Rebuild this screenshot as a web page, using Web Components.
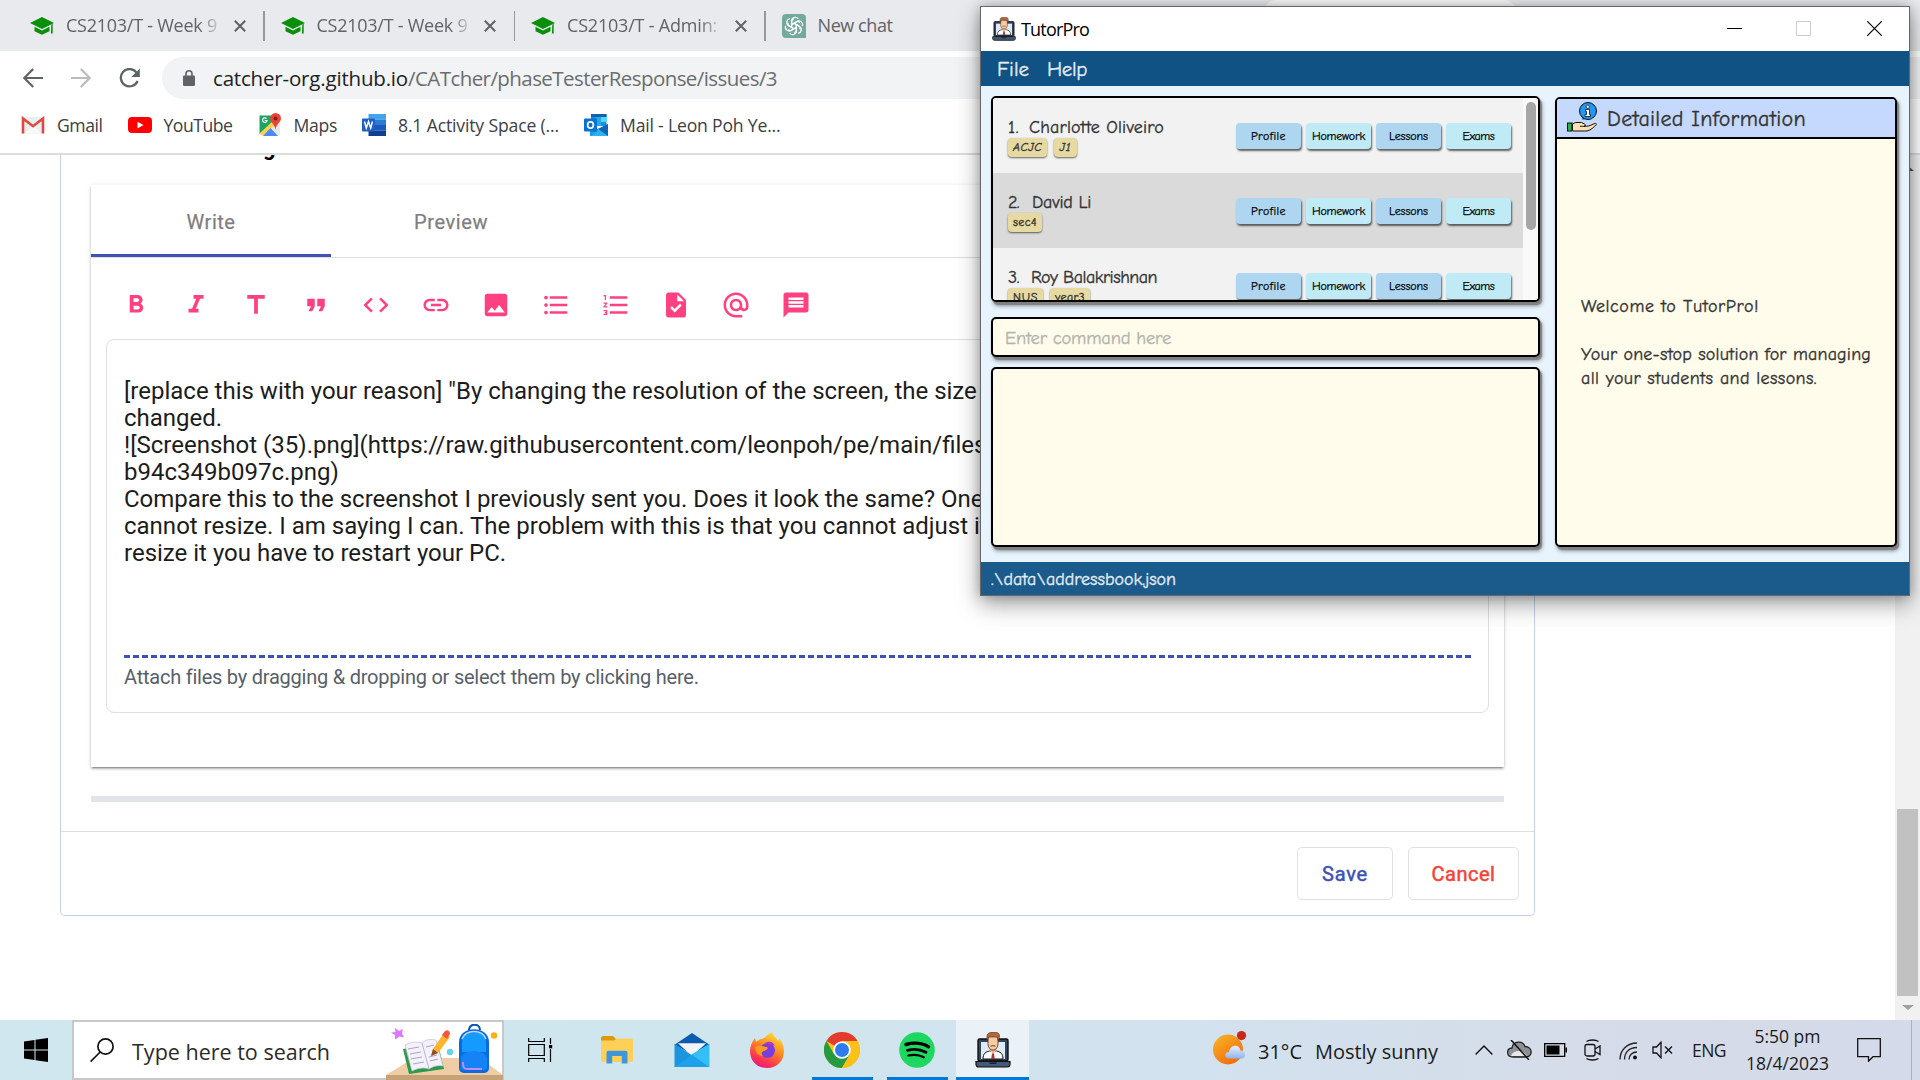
<!DOCTYPE html>
<html lang="en">
<head>
<meta charset="utf-8">
<title>Desktop</title>
<style>
html,body{margin:0;padding:0;width:1920px;height:1080px;overflow:hidden;background:#fff}
</style>
</head>
<body>
<desk-top></desk-top>
<script>
const UI='"Segoe UI","Open Sans","Noto Sans",sans-serif';
const COMIC='"Comic Sans MS","Comic Neue","Noto Sans",sans-serif';
const define=(name,css,html)=>customElements.define(name,class extends HTMLElement{
  constructor(){super();this.attachShadow({mode:'open'});}
  connectedCallback(){
    if(this.shadowRoot.childNodes.length)return;
    const t=document.createElement('template');
    t.innerHTML='<style>*{box-sizing:border-box}:host{display:block;box-sizing:border-box}'+css+'</style>'+(typeof html==='function'?html(this):html);
    this.shadowRoot.append(t.content.cloneNode(true));
  }
});

/* A single line of text spread over a given width. */
customElements.define('fit-text',class extends HTMLElement{
  connectedCallback(){
    if(!this.shadowRoot){
      this.attachShadow({mode:'open'}).innerHTML='<style>:host{display:block;white-space:pre;flex:none}span{display:inline-block}</style><span><slot></slot></span>';
    }
    const w=+this.getAttribute('w');
    this.style.width=w+'px';
    const s=this.shadowRoot.querySelector('span');
    const n=s.getBoundingClientRect().width, c=[...this.textContent].length;
    if(n&&w)s.style.letterSpacing=((w-n)/c).toFixed(3)+'px';
  }
});

const M=p=>`<svg viewBox="0 0 24 24"><path fill="currentColor" d="${p}"/></svg>`;
const TUTOR=`<svg viewBox="0 0 36 36"><rect x="3" y="7" width="30" height="22" rx="1.5" fill="#33465c" stroke="#111" stroke-width="1.4"/><rect x="6" y="10" width="24" height="17" fill="#dfeaf8"/><path d="M8 27c0-6 3-7 6.500-8h7c3.500 1 6.500 2 6.500 8z" fill="#fff" stroke="#111" stroke-width="1"/><path d="M14.500 18l3.500 4 3.500-4v-3h-7z" fill="#eab88e"/><path d="M17 21.500h2l.8 5.500h-3.600z" fill="#b2323c"/><path d="M13 4.500h10v7c0 4-2.200 6.500-5 6.500s-5-2.500-5-6.500z" fill="#f7cba4" stroke="#5d3420" stroke-width=".9"/><path d="M15.500 14.500c1-1.300 4-1.300 5 0" stroke="#9c5a33" stroke-width="1.200" fill="none"/><path d="M12 9V4c0-2 2-3.500 4-3.500h5c2 0 3.500 1.500 3.500 3.500l-1 5-1.500-4h-8z" fill="#b06a3c" stroke="#5d3420" stroke-width=".7"/><path d="M1 29.500h34v2.500c0 2-1 3-3 3H4c-2 0-3-1-3-3z" fill="#435b78" stroke="#111" stroke-width="1.200"/><path d="M14 30.500h8l-1 1.500h-6z" fill="#16202c"/></svg>`;
const ICONS={
 cap:`<svg viewBox="0 0 24 18"><g fill="#0a8f0a"><path d="M12 0L0 6l12 6 12-6z"/><path d="M4.500 9.800v4.400L12 17.800l7.500-3.600V9.800L12 13.500z"/><path d="M21.300 7.500l1.400-.7v9.700h-1.800z"/></g></svg>`,
 close:`<svg viewBox="0 0 12 12"><path d="M.8.8l10.400 10.400M11.200.8L.8 11.200" stroke="#5f6368" stroke-width="2" fill="none"/></svg>`,
 chat:`<svg viewBox="0 0 24 24"><path d="M4 0h16a4 4 0 0 1 4 4v20H4a4 4 0 0 1-4-4V4a4 4 0 0 1 4-4z" fill="#74aa9c"/><g fill="none" stroke="#fff" stroke-width="1.250">${[0,60,120,180,240,300].map(a=>`<path transform="rotate(${a} 12 12)" d="M9.600 13.400V7.200a3.800 3.800 0 0 1 6.700-2.400M12 9.200l5 2.900a2.400 2.400 0 0 1 .8 3"/>`).join('')}</g></svg>`,
 back:`<svg viewBox="0 0 20 20"><path d="M20 10H1.500M10.200 1L1.300 10l8.900 9" fill="none" stroke="#5f6368" stroke-width="2.200"/></svg>`,
 fwd:`<svg viewBox="0 0 20 20"><path d="M0 10h18.500M9.800 1l8.900 9-8.900 9" fill="none" stroke="#babcbe" stroke-width="2.200"/></svg>`,
 reload:`<svg viewBox="0 0 21 21"><path d="M17.600 4.600A8.700 8.700 0 1 0 18.600 13" fill="none" stroke="#5f6368" stroke-width="2.300"/><path d="M20.800 .5v8.500h-8.500z" fill="#5f6368"/></svg>`,
 lock:`<svg viewBox="0 0 12 16"><rect y="5.500" width="12" height="10.500" rx="1.300" fill="#5f6368"/><path d="M3 6V3.800a3 3 0 0 1 6 0V6" fill="none" stroke="#5f6368" stroke-width="1.600"/></svg>`,
 gmail:`<svg viewBox="0 0 24 18"><rect x="1" y="1" width="22" height="16.500" rx="1" fill="#eceff1"/><path d="M4 17.500L12 9l8 8.500z" fill="#f8f8f8"/><path d="M2 17.500V2.500L12 10.200 22 2.500v15" fill="none" stroke="#dd4b3e" stroke-width="2.600"/></svg>`,
 yt:`<svg viewBox="0 0 24 16"><rect width="24" height="16" rx="4" fill="#f00"/><path d="M9.500 4.800v6.600l6-3.300z" fill="#fff"/></svg>`,
 maps:`<svg viewBox="0 0 24 24"><path d="M2 3h20v19H2z" fill="#e9e9e9"/><path d="M1.500 2.500H17l-3 8L2 21H1.500z" fill="#1fa463"/><path d="M1.500 20.500L15 8l3 3L5 23z" fill="#ffd24c"/><path d="M5 23l7.500-8L20 23z" fill="#4a8af4"/><path d="M17.500 0a5.500 5.500 0 0 0-5.400 5.500c0 3.500 4.600 5.300 5.400 11.500.800-6.200 5.500-8 5.500-11.500A5.500 5.500 0 0 0 17.500 0z" fill="#ea4335"/><circle cx="17.500" cy="5.400" r="2" fill="#812018"/><path d="M8.500 5.500a2.300 2.300 0 1 0 .6 2H6.800" stroke="#fff" stroke-width="1.200" fill="none"/></svg>`,
 word:`<svg viewBox="0 0 24 22"><path d="M6.500 0H24v5.500H6.500z" fill="#41a5ee"/><path d="M6.500 5.500H24V11H6.500z" fill="#2b7cd3"/><path d="M6.500 11H24v5.500H6.500z" fill="#185abd"/><path d="M6.500 16.500H24V22H6.500z" fill="#103f91"/><rect y="4.500" width="13" height="13" rx="1" fill="#1f5fc4"/><path d="M2.500 7.500l1.800 6.500 2.200-6.500 2.200 6.500 1.800-6.500" fill="none" stroke="#fff" stroke-width="1.500"/></svg>`,
 outlook:`<svg viewBox="0 0 24 22"><path d="M7 0h15.500v12H7z" fill="#1490df"/><path d="M7 0h15.500v3H7z" fill="#0f62ae"/><path d="M12 3h5v9h-5z" fill="#28a8ea"/><path d="M17 3h5.500v5H17z" fill="#50d9ff"/><path d="M6 11l9 4.500L24 10v12H6z" fill="#1a9be8"/><path d="M14 14.800L24 22V10z" fill="#1066b5"/><path d="M7 22l8-6 9 6z" fill="#28b4f0"/><rect y="4.500" width="13" height="13" rx="1" fill="#0a72cf"/><ellipse cx="6.500" cy="11" rx="2.900" ry="3.200" fill="none" stroke="#fff" stroke-width="1.700"/></svg>`,
 bold:M('M15.600 10.790c.970-.670 1.650-1.770 1.650-2.790 0-2.260-1.750-4-4-4H7v14h7.040c2.090 0 3.710-1.700 3.710-3.790 0-1.520-.860-2.820-2.150-3.420zM10 6.500h3c.830 0 1.500.670 1.500 1.500s-.670 1.500-1.500 1.500h-3v-3zm3.500 9H10v-3h3.500c.830 0 1.500.670 1.500 1.500s-.670 1.500-1.500 1.500z'),
 italic:M('M10 4v3h2.210l-3.420 8H6v3h8v-3h-2.210l3.420-8H18V4z'),
 title:M('M5 4v3h5.500v12h3V7H19V4z'),
 quote:M('M6 17h3l2-4V7H5v6h3zm8 0h3l2-4V7h-6v6h3z'),
 code:M('M9.400 16.600L4.800 12l4.600-4.600L8 6l-6 6 6 6 1.400-1.400zm5.200 0l4.600-4.600-4.600-4.600L16 6l6 6-6 6-1.400-1.400z'),
 link:M('M3.900 12c0-1.710 1.390-3.100 3.100-3.100h4V7H7c-2.760 0-5 2.240-5 5s2.240 5 5 5h4v-1.900H7c-1.710 0-3.100-1.390-3.100-3.100zM8 13h8v-2H8v2zm9-6h-4v1.900h4c1.710 0 3.100 1.390 3.100 3.100s-1.390 3.100-3.100 3.100h-4V17h4c2.760 0 5-2.240 5-5s-2.240-5-5-5z'),
 image:M('M21 19V5c0-1.100-.9-2-2-2H5c-1.100 0-2 .9-2 2v14c0 1.100.9 2 2 2h14c1.100 0 2-.9 2-2zM8.500 13.500l2.500 3.010L14.500 12l4.500 6H5l3.500-4.500z'),
 ul:M('M4 10.500c-.830 0-1.500.670-1.500 1.500s.670 1.500 1.500 1.500 1.500-.670 1.500-1.500-.670-1.500-1.500-1.500zm0-6c-.830 0-1.500.670-1.500 1.500S3.170 7.500 4 7.500 5.500 6.830 5.500 6 4.830 4.500 4 4.500zm0 12c-.830 0-1.500.680-1.500 1.500s.680 1.500 1.500 1.500 1.500-.680 1.500-1.500-.670-1.500-1.500-1.500zM7 19h14v-2H7v2zm0-6h14v-2H7v2zm0-8v2h14V5H7z'),
 ol:M('M2 17h2v.5H3v1h1v.5H2v1h3v-4H2v1zm1-9h1V4H2v1h1v3zm-1 3h1.800L2 13.100v.9h3v-1H3.200L5 10.900V10H2v1zm5-6v2h14V5H7zm0 14h14v-2H7v2zm0-6h14v-2H7v2z'),
 task:M('M14 2H6c-1.100 0-1.990.9-1.990 2L4 20c0 1.100.890 2 1.990 2H18c1.100 0 2-.9 2-2V8l-6-6zm-3.060 16L7.400 14.460l1.410-1.410 2.120 2.120 4.240-4.240 1.410 1.410L10.940 18zM13 9V3.500L18.500 9H13z'),
 at:M('M12 2C6.480 2 2 6.480 2 12s4.480 10 10 10h5v-2h-5c-4.340 0-8-3.660-8-8s3.660-8 8-8 8 3.660 8 8v1.430c0 .790-.710 1.570-1.500 1.570s-1.500-.780-1.500-1.570V12c0-2.760-2.240-5-5-5s-5 2.240-5 5 2.240 5 5 5c1.380 0 2.640-.560 3.540-1.470.650.890 1.770 1.470 2.960 1.470 1.970 0 3.500-1.600 3.500-3.570V12c0-5.520-4.480-10-10-10zm0 13c-1.660 0-3-1.340-3-3s1.340-3 3-3 3 1.340 3 3-1.340 3-3 3z'),
 msg:M('M20 2H4c-1.100 0-1.990.9-1.990 2L2 22l4-4h14c1.100 0 2-.9 2-2V4c0-1.100-.9-2-2-2zM6 9h12v2H6V9zm12 5H6v-2h12v2zm0-6H6V6h12v2z'),
 tutor:TUTOR,
 min:`<svg viewBox="0 0 15 15"><path d="M0 7.500h15" stroke="#000"/></svg>`,
 max:`<svg viewBox="0 0 15 15"><path d="M.5.5h14v14H.5z" stroke="#ccc" fill="none"/></svg>`,
 x:`<svg viewBox="0 0 15 15"><path d="M.3.300l14.400 14.400M14.700.300L.3 14.700" stroke="#000" stroke-width="1.200"/></svg>`,
 info:`<svg viewBox="0 0 30 30"><path d="M14.500 14l1 4 4-1.500z" fill="#1d6fb8"/><circle cx="21" cy="9" r="8.500" fill="#2196f3" stroke="#111" stroke-width="1"/><circle cx="20.800" cy="4.700" r="1.600" fill="#fff" stroke="#111" stroke-width=".7"/><path d="M18.500 7.500h4v5h1v2h-5.300v-2h1.300v-3h-1z" fill="#fff" stroke="#111" stroke-width=".8"/><rect x=".5" y="21" width="4.500" height="8" fill="#2fae4e" stroke="#111"/><path d="M5.500 22l3-1.500h6l3 1.500c1.500.8 1 2-.5 2.200 3 .3 6-.2 9-2 1.500-.8 3.500-1.200 3.500.200-2 2-5 5.600-9.500 6.600H6l-.5-1z" fill="#ffe0b2" stroke="#111" stroke-width="1"/><path d="M13 24.300h5" stroke="#111" stroke-width=".9"/></svg>`,
 win:`<svg viewBox="0 0 24 24"><path d="M0 3.400L10.500 2v9.500H0zM11.500 1.800L24 0v11.500H11.500zM0 12.500h10.500V22L0 20.600zM11.500 12.500H24V24l-12.500-1.800z"/></svg>`,
 search:`<svg viewBox="0 0 24 24"><circle cx="15.500" cy="8.500" r="7.600" fill="none" stroke="#111" stroke-width="1.700"/><path d="M10.200 14L.6 23.500" stroke="#111" stroke-width="1.700"/></svg>`,
 school:`<svg viewBox="0 0 117 56"><path d="M0 51L28 34h66l23 17z" fill="#efcda6"/><path d="M0 51h117v5H0z" fill="#c8a277"/><path d="M9 4l4 3 4-2-1 4.500 2 4-4.500-1L9 15.500V11L5 8.500 9.500 8z" fill="#dd78fa"/><path d="M17 25l6 25 35-5-6-25z" fill="#2b9a4a"/><path d="M19 21c5-3 12-3.500 17-2 4-4 9-4 14-3l7 26c-5-1-10 0-14 3-5-2-11-1-17 2z" fill="#f4f1fb" stroke="#c9c2dc" stroke-width=".8"/><path d="M36 19l7 26" stroke="#bbb4d2"/><g stroke="#aaa4bd" stroke-width="1"><path d="M22 25l11-2M24 30l11-2M25 35l11-2M27 40l11-2M40 23l8-2M43 33l8-2M44 37l8-2"/></g><path d="M45 32l2-7L58 9l6 4-12 16z" fill="#fbb62e"/><path d="M45 32l2-7 5 4z" fill="#8e4b34"/><path d="M56 11l3-4c2-2 5 0 5 3l-3 5z" fill="#f4573c"/><circle cx="64" cy="28" r="3.200" fill="#66d3e8"/><circle cx="108" cy="11.500" r="3.200" fill="#fbb116"/><path d="M83 6c0-7 11-7 11 0" stroke="#0b56b5" stroke-width="2.200" fill="none"/><path d="M73 18c0-17 30-17 30 0v26c0 4-3 5-6 5H79c-3 0-6-1-6-5z" fill="#0a6be0"/><path d="M76 18c0-13 24-13 24 0v10H76z" fill="#159bff"/><path d="M75 34c2-9 24-9 26 0v9c0 2-1 3-3 3H78c-2 0-3-1-3-3z" fill="#1583f5"/><path d="M77 38c0 6 1 7 5 7h14" stroke="#c58af5" stroke-width="2" fill="none"/><path d="M76 15c4-10 20-10 24 0" stroke="#bcd9fb" stroke-width="1.500" fill="none"/></svg>`,
 task_view:`<svg viewBox="0 0 25 24"><g fill="none" stroke="#000" stroke-width="1.200"><path d="M.7 0v3.500h15.600V0M.7 24v-3.500h15.600V24M.7 6.500h15.600v11H.7zM22.500 0v6M22.500 11v13"/></g><path d="M21 7h3.200v3.300H21z"/></svg>`,
 folder:`<svg viewBox="0 0 32 28"><path d="M0 2c0-1 .6-2 2-2h10l3 3v4H0z" fill="#dd9a04"/><path d="M0 4.500h13l3-2h14c1.300 0 2 .7 2 2V24c0 1.300-.7 2-2 2H2c-1.300 0-2-.7-2-2z" fill="#ffd058"/><path d="M5.500 27.500V17c0-1.300.8-2.200 2-2.200h17c1.200 0 2 .900 2 2.200v10.500h-5.700V20h-9.600v7.500z" fill="#3f96da"/></svg>`,
 mail:`<svg viewBox="0 0 36 35"><path d="M0 12L18 0l18 12-18 10z" fill="#0a5cae"/><path d="M3.500 10.500h29L18 24z" fill="#f2f4f6"/><path d="M0 11l36 24H0z" fill="#1b95e0"/><path d="M36 11v24L17 22.500z" fill="#35c0f5"/><path d="M0 35l18-12.500L36 35z" fill="#1ca1ea"/></svg>`,
 firefox:`<svg viewBox="0 0 34 36"><defs><linearGradient id="a" x1=".8" y1="0" x2=".3" y2="1"><stop offset="0" stop-color="#ffe83c"/><stop offset=".45" stop-color="#ff8a1f"/><stop offset=".8" stop-color="#ff3550"/><stop offset="1" stop-color="#e31587"/></linearGradient></defs><path d="M22 0c1 4 4 5 6 9 1-1 1-2 1-3 3 4 5 8 5 13 0 10-7 17-17 17S0 29 0 19c0-5 2-9 5-13l1 4c2-2 3-2 5-3 3 0 5-3 11-7z" fill="url(#a)"/><circle cx="17.500" cy="18.500" r="7.500" fill="#7a3ee0"/><path d="M5 15c5-3 8 0 11 0 3 0 2 3-2 4-3 1-3 3-1 5-5 0-8-4-8-9z" fill="#ff9a1c"/><path d="M15 11c5-3 9 0 10 3-2-1-3-1-5-1z" fill="#b832c8"/></svg>`,
 chrome:`<svg viewBox="0 0 36 36"><circle cx="18" cy="18" r="18" fill="#fbc116"/><path d="M18 18L2.400 9A18 18 0 0 1 33.600 9z" fill="#e33b2e"/><path d="M2.400 9A18 18 0 0 0 18 36l7.800-13.500L18 18 10.200 22.500z" fill="#249a41"/><path d="M18 9h15.600A18 18 0 0 1 18 36l7.800-13.500z" fill="#fbc116"/><circle cx="18" cy="18" r="8.800" fill="#fff"/><circle cx="18" cy="18" r="7" fill="#2f7bed"/></svg>`,
 spotify:`<svg viewBox="0 0 36 36"><circle cx="18" cy="18" r="17.800" fill="#1ed760"/><g fill="none" stroke="#000" stroke-linecap="round"><path d="M7 12.500c7-2 16-1.500 22.500 2.200" stroke-width="3.400"/><path d="M8.500 18.300c6.500-1.800 13-1 18.500 2" stroke-width="2.800"/><path d="M9.300 23.500c5.500-1.300 11-.8 15.500 1.800" stroke-width="2.200"/></g></svg>`,
 weather:`<svg viewBox="0 0 34 34"><defs><linearGradient id="b" x1="0" y1="0" x2=".7" y2="1"><stop offset="0" stop-color="#f6b828"/><stop offset="1" stop-color="#f46a0c"/></linearGradient><linearGradient id="c" x1="0" y1="0" x2="0" y2="1"><stop offset="0" stop-color="#e6effc"/><stop offset="1" stop-color="#8fb4ee"/></linearGradient></defs><circle cx="15" cy="18.500" r="15" fill="url(#b)"/><path d="M16 27.500c-5 0-5-6.500 0-6.500 1-8 11-8 11.500-1.500 6 0 6 8 1 8z" fill="url(#c)"/><circle cx="28.500" cy="4.600" r="4.600" fill="#c42b1c"/></svg>`,
 chev:`<svg viewBox="0 0 18 10"><path d="M.6 9.500L9 1l8.400 8.500" fill="none" stroke="#111" stroke-width="1.400"/></svg>`,
 cloud:`<svg viewBox="0 0 25 20"><path d="M6 17c-7 0-7-8.500-1-9C6 .500 16 .500 18 6.500c8 0 8 10.500 1 10.500z" fill="#8d9096" stroke="#222" stroke-width="1.300"/><path d="M4 16c2-6 12-7 16 0z" fill="#e8e8ea"/><path d="M4 0l18 20" stroke="#111" stroke-width="1.500"/></svg>`,
 batt:`<svg viewBox="0 0 23 14"><path d="M.7.700h20v12.600H.7z" fill="none" stroke="#000" stroke-width="1.300"/><path d="M2.500 2.500h13v9h-13zM21.500 4.500H23v5h-1.500z"/></svg>`,
 cam:`<svg viewBox="0 0 18 22"><g fill="none" stroke="#111" stroke-width="1.300"><rect x="1" y="5.500" width="10" height="11.500" rx="2"/><path d="M11 10l5-3v8.500l-5-3M2.500 2.500c3-2 9-2 12 0M2.500 19.500c3 2 9 2 12 0"/></g></svg>`,
 wifi:`<svg viewBox="0 0 19 18"><g fill="none" stroke="#222" stroke-width="1.300"><path d="M1 17.500C1 8 8 1 18 1M5.500 17.500C5.500 10.500 10 5.500 18 5.500M10 17.500c0-4 3-7.500 8-7.500"/></g><circle cx="16" cy="15.500" r="1.900"/></svg>`,
 vol:`<svg viewBox="0 0 21 18"><path d="M1 6h3.500L9 1.200v15.600L4.500 12H1z" fill="none" stroke="#111" stroke-width="1.300"/><path d="M13 5.500l7 7M20 5.500l-7 7" stroke="#111" stroke-width="1.300"/></svg>`,
 note:`<svg viewBox="0 0 24 24"><path d="M.7.700h22.600v18H16l-4.500 4.500v-4.500H.7z" fill="none" stroke="#111" stroke-width="1.300"/></svg>`
};
customElements.define('i-con',class extends HTMLElement{
  connectedCallback(){
    if(this.shadowRoot)return;
    const w=this.getAttribute('w'),h=this.getAttribute('h')||w;
    this.attachShadow({mode:'open'}).innerHTML=`<style>:host{display:block;flex:none;width:${w}px;height:${h}px}svg{display:block;width:100%;height:100%}</style>`+ICONS[this.getAttribute('n')];
  }
});

/* ---------- browser ---------- */
define('browser-tab',`:host{display:flex;align-items:center;height:41px;flex:none;width:250.500px;font:18px ${UI};color:#5f6368}
.t{margin:-2px 0 0 12px;width:155px;overflow:hidden;-webkit-mask:linear-gradient(90deg,#000 132px,transparent 158px)}
.x{margin-left:12.500px}.s{width:1.500px;height:30px;background:#96989c;margin-left:17.500px}`,
 e=>`<i-con n="cap" w="24" h="18"></i-con><div class="t"><fit-text w="${e.getAttribute('w')}">${e.getAttribute('label')}</fit-text></div><i-con class="x" n="close" w="12"></i-con><div class="s"></div>`);

define('tab-strip',`:host{height:51px;background:#e8eaed;display:flex;padding:5px 0 0 30px;position:relative;font:18px ${UI};color:#5f6368}
.n{display:flex;align-items:center;gap:12px;height:41px}.n fit-text{margin-top:-2px}
.a{position:absolute;left:1264px;top:0;width:252px;height:12px;border-radius:12px 12px 0 0;background:#fafafa}`,
`<browser-tab label="CS2103/T - Week 9" w="151"></browser-tab><browser-tab label="CS2103/T - Week 9" w="151"></browser-tab><browser-tab label="CS2103/T - Admin:" w="150"></browser-tab>
<div class="n"><i-con n="chat" w="24"></i-con><fit-text w="75">New chat</fit-text></div><div class="a"></div>`);

define('address-bar',`:host{height:54px;display:flex;align-items:center;padding:0 0 0 23px;background:#fff;font:20.500px ${UI};color:#6a6d71}
.f{margin-left:28px}.r{margin-left:27.500px}
.o{margin-left:22.500px;height:42px;flex:1;border-radius:21px 0 0 21px;background:#f1f3f4;display:flex;align-items:center;padding-left:21px}
.d{color:#202124;margin-left:18px}`,
`<i-con n="back" w="20"></i-con><i-con class="f" n="fwd" w="20"></i-con><i-con class="r" n="reload" w="21"></i-con>
<div class="o"><i-con n="lock" w="12" h="16"></i-con><fit-text class="d" w="195">catcher-org.github.io</fit-text><fit-text w="369">/CATcher/phaseTesterResponse/issues/3</fit-text></div>`);

define('book-mark',`:host{display:flex;align-items:center;gap:12px;flex:none;color:#3c4043}.b{width:24px;display:flex;justify-content:center}`,
 e=>`<div class="b"><i-con n="${e.getAttribute('n')}" w="24" h="${e.getAttribute('h')}"></i-con></div><fit-text w="${e.getAttribute('w')}">${e.getAttribute('label')}</fit-text>`);

define('bookmark-bar',`:host{height:50px;display:flex;padding:0 0 8px 21px;align-items:center;background:#fff;font:17.600px ${UI};border-bottom:2px solid #dadce0}
book-mark{margin-right:25px}`,
`<book-mark n="gmail" h="18" label="Gmail" w="45.500"></book-mark><book-mark n="yt" h="16" label="YouTube" w="69"></book-mark><book-mark n="maps" h="24" label="Maps" w="43.500"></book-mark><book-mark n="word" h="22" label="8.1 Activity Space (..." w="161"></book-mark><book-mark n="outlook" h="22" label="Mail - Leon Poh Ye..." w="160.500"></book-mark>`);

/* ---------- issue editor ---------- */
define('tab-head',`:host{display:flex;height:73px;border-bottom:1px solid #dfdfdf;font:20px Roboto,sans-serif;-webkit-text-stroke:.25px currentColor;color:#7f7f7f}
div{width:240px;height:72px;display:flex;align-items:center;justify-content:center;padding-top:1px}
.a{border-bottom:3px solid #3f51b5;padding-top:4px}`,
`<div class="a"><fit-text w="49">Write</fit-text></div><div><fit-text w="74">Preview</fit-text></div>`);

define('tool-row',`:host{display:flex;gap:30px;padding:32px 0 0 30px;color:#ff4081;height:81px}`,
 ['bold','italic','title','quote','code','link','image','ul','ol','task','at','msg'].map(n=>`<i-con n="${n}" w="30"></i-con>`).join(''));

define('comment-box',`:host{margin:0 15px;height:374px;border:1px solid #e0e0e0;border-radius:8px;padding:38px 16.500px 0 17px;font:24px/27px Roboto,sans-serif;color:#1c1c1c}
.t{height:277px;white-space:pre;overflow:hidden}
.d{height:3px;background:repeating-linear-gradient(90deg,#3f51b5 0 6px,transparent 6px 9px)}
.h{font-size:20px;line-height:24px;margin-top:7px;color:#586069}`,
`<div class="t"><div>[replace this with your reason] "By changing the resolution of the screen, the size</div><div>changed.</div><div>![Screenshot (35).png](https://raw.githubusercontent.com/leonpoh/pe/main/files</div><div>b94c349b097c.png)</div><div>Compare this to the screenshot I previously sent you. Does it look the same? One</div><div>cannot resize. I am saying I can. The problem with this is that you cannot adjust it</div><div>resize it you have to restart your PC.</div></div>
<div class="d"></div><div class="h"><fit-text w="574">Attach files by dragging &amp; dropping or select them by clicking here.</fit-text></div>`);

define('flat-button',`:host{height:53px;border:1px solid #e0e0e0;border-radius:5px;display:flex;align-items:center;justify-content:center;font:20px Roboto,sans-serif;-webkit-text-stroke:.5px currentColor}`,`<slot></slot>`);

define('issue-page',`:host{flex:1;display:flex;justify-content:space-between;overflow:hidden}
.c{margin-left:60px;width:1475px;height:761px;border:1px solid #c4d2e8;border-top:0;border-radius:0 0 5px 5px;display:flex;flex-direction:column}
.g{height:30px;padding-left:202px;font:700 22px/0 Roboto,sans-serif;overflow:hidden;color:#000}
.g span{display:block;margin-top:-7px}
.p{margin:0 30px;height:582px;box-shadow:0 3px 1px -2px rgba(0,0,0,.2),0 2px 2px rgba(0,0,0,.22),0 1px 5px rgba(0,0,0,.12)}
.b{height:6px;background:#e1e4e8;margin:29px 30px;flex:none}
.f{flex:1;border-top:1px solid #dedede;display:flex;justify-content:flex-end;gap:15px;padding:15px 15px 0}
.s{width:25px;background:#f1f1f1;display:flex;flex-direction:column;align-items:center;justify-content:space-between;padding:11px 0 10px}
.u{border:6px solid transparent;border-top:0;border-bottom:5px solid #505050}
.d{border:6px solid transparent;border-bottom:0;border-top:5px solid #a0a0a0;margin-top:9px}
.th{width:21px;height:187px;background:#c1c1c1}.l{display:flex;flex-direction:column;align-items:center}`,
`<div class="c"><div class="g"><span>g</span></div><div class="p"><tab-head></tab-head><tool-row></tool-row><comment-box></comment-box></div><div class="b"></div>
<div class="f"><flat-button style="width:96px;color:#3f51b5"><fit-text w="46">Save</fit-text></flat-button><flat-button style="width:111px;color:#f44336"><fit-text w="64">Cancel</fit-text></flat-button></div></div>
<div class="s"><div class="u"></div><div class="l"><div class="th"></div><div class="d"></div></div></div>`);

/* ---------- TutorPro ---------- */
define('student-row',`:host{height:75px;flex:none;display:flex;align-items:flex-start;background:var(--bg);font:18px/22px ${COMIC};color:#333}
.i{width:228px;flex:none;padding:19px 0 0 15px}
.n{display:flex}.n fit-text:first-child{margin-right:var(--g)}
.t{display:flex;gap:7px;font-size:12px;line-height:19px;margin-top:-1px}
.t div{height:19px;background:#e6d9a2;border-radius:4px;box-shadow:0 1px 2px rgba(0,0,0,.6);display:flex;justify-content:center}
.b{padding:25px 0 0 15px;display:flex;gap:5px}
.b div{width:65px;height:26px;border-radius:4px;background:#aed6f1;font-size:12px;line-height:27px;color:#000;box-shadow:1px 2px 2px rgba(0,0,0,.6);display:flex;justify-content:center;-webkit-text-stroke:.25px currentColor}
.b div:nth-child(even){background:#bfeaf6}`,
 e=>{const g=k=>e.getAttribute(k);return `<div class="i"><div class="n"><fit-text w="11">${g('no')}.</fit-text><fit-text w="${g('w')}">${g('name')}</fit-text></div><div class="t">${g('tags').split(',').map(t=>{const[a,w,i]=t.split(':');return `<div style="width:${w}px;font-style:${a==='ACJC'||a==='J1'?'italic':'normal'}"><fit-text w="${i}">${a}</fit-text></div>`}).join('')}</div></div>
<div class="b"><div><fit-text w="35">Profile</fit-text></div><div><fit-text w="53">Homework</fit-text></div><div><fit-text w="39">Lessons</fit-text></div><div><fit-text w="32">Exams</fit-text></div></div>`});

define('frame-box',`:host{border:2px solid #000;border-radius:5px;background:#fffceb;box-shadow:2px 3px 1px #808080,2px 4px 4px rgba(0,0,0,.4);overflow:hidden}`,`<slot></slot>`);

define('student-list',`:host{display:flex;height:202px;background:#f9f9f9;border-radius:3px;overflow:hidden}.l{width:530px;flex:none}
.s{width:10px;height:128px;border-radius:5px;background:#a6a6a6;margin:4px 0 0 3px}`,
`<div class="l"><student-row style="--bg:#f2f2f2;--g:10px" no="1" name="Charlotte Oliveiro" w="135" tags="ACJC:39:29,J1:23:12"></student-row><student-row style="--bg:#dadada;--g:13px" no="2" name="David Li" w="59" tags="sec4:34:24"></student-row><student-row style="--bg:#f2f2f2;--g:12px" no="3" name="Roy Balakrishnan" w="126" tags="NUS:35:25,year3:40:30"></student-row></div><div class="s"></div>`);

define('detail-panel',`:host{height:446px;display:flex;flex-direction:column;color:#333;font-family:${COMIC}}
.h{height:40px;background:#c5d9ff;border-bottom:2px solid #000;display:flex;align-items:center;padding:0 0 2px 10px;gap:10px;font-size:22px}
.h fit-text{margin-top:3px}
.m{padding:156px 0 0 24px;font-size:18px;line-height:24px}.m fit-text:first-child{margin-bottom:24px}`,
`<div class="h"><i-con n="info" w="30"></i-con><fit-text w="199">Detailed Information</fit-text></div><div class="m"><fit-text w="178">Welcome to TutorPro!</fit-text><fit-text w="290">Your one-stop solution for managing</fit-text><fit-text w="236">all your students and lessons.</fit-text></div>`);

define('tutor-window',`:host{position:absolute;left:980px;top:6px;width:930px;height:590px;border:1px solid #666;display:flex;flex-direction:column;background:#e8f4fd;box-shadow:0 8px 22px rgba(0,0,0,.38),0 0 10px rgba(0,0,0,.22);font-family:${COMIC};-webkit-text-stroke:.35px currentColor}
.t{height:44px;background:#fff;display:flex;align-items:center;padding:0 27px 0 11px;font:18px ${UI};color:#000;-webkit-text-stroke:0}
.t fit-text{margin:0 auto 0 5px}
.w{display:flex;gap:54px;align-items:center;margin-top:-1px}
.w i-con:last-child{margin-left:2px}
.m{height:35px;background:#105284;color:#e4edf5;display:flex;align-items:center;gap:18px;padding:1px 0 0 16px;font-size:21px}
.b{height:476px;display:flex;gap:15px;padding:10px 0 0 10px}
.l{width:549px;display:flex;flex-direction:column}
.c{height:40px;margin:15px 0 10px;color:#b4b4ae;font-size:18.500px}
.c div{padding:2px 0 0 12px;height:36px;display:flex;align-items:center}
.s{flex:1;background:#1a5b8c;color:#e4edf5;display:flex;align-items:center;padding:2px 0 0 10px;font-size:18px}`,
`<div class="t"><i-con n="tutor" w="24"></i-con><fit-text w="68">TutorPro</fit-text><div class="w"><i-con n="min" w="15"></i-con><i-con n="max" w="15"></i-con><i-con n="x" w="15"></i-con></div></div>
<div class="m"><fit-text w="32">File</fit-text><fit-text w="40">Help</fit-text></div>
<div class="b"><div class="l"><frame-box style="height:206px"><student-list></student-list></frame-box><frame-box class="c"><div><fit-text w="166">Enter command here</fit-text></div></frame-box><frame-box style="height:180px"></frame-box></div>
<frame-box style="width:342px;height:450px;margin-top:1px"><detail-panel></detail-panel></frame-box></div>
<div class="s"><fit-text w="185">.\\data\\addressbook.json</fit-text></div>`);

/* ---------- taskbar ---------- */
define('task-app',`:host{height:60px;display:flex;flex-direction:column;align-items:center;justify-content:center;width:73px;flex:none;position:relative}
.u{position:absolute;bottom:0;height:3px;background:#0078d7}`,
 e=>`<i-con n="${e.getAttribute('n')}" w="${e.getAttribute('w')}" h="${e.getAttribute('h')}"></i-con>${e.hasAttribute('u')?`<div class="u" style="width:${e.getAttribute('u')}px"></div>`:''}`);

define('task-bar',`:host{height:60px;display:flex;background:linear-gradient(90deg,#d0e7ef 0,#d0e6ef 35%,#d2e2ee 62%,#d6dbe9 85%,#d4dae9 100%);font:20px ${UI};color:#1a1a1a}
.st{width:72px;display:flex;align-items:center;justify-content:center}
.se{width:432px;border:2px solid #c8c8ca;background:#fff;display:flex;align-items:center;padding-left:16px;font-size:21.500px;color:#2b2b2b;position:relative}
.se fit-text{margin-left:18px;margin-top:3px}
.dec{position:absolute;right:-1px;bottom:-2px}
.apps{display:flex}
.tr{flex:1;display:flex;align-items:center;position:relative}
.tr>*{flex:none}`,
`<div class="st"><i-con n="win" w="24"></i-con></div><div class="se"><i-con n="search" w="24"></i-con><fit-text w="198">Type here to search</fit-text><i-con class="dec" n="school" w="117" h="56"></i-con></div>
<div class="apps"><task-app n="task_view" w="25" h="24"></task-app><task-app style="width:79px" n="folder" w="32" h="28"></task-app><task-app style="width:71px" n="mail" w="36" h="34"></task-app><task-app style="width:79px" n="firefox" w="34" h="36"></task-app><task-app style="width:72px" n="chrome" w="36" h="36" u="61"></task-app><task-app style="width:78px" n="spotify" w="36" h="36" u="61"></task-app><task-app n="tutor" w="36" h="36" u="73" style="background:#eaf2f7"></task-app></div>
<div class="tr"><i-con n="weather" w="34" style="margin-left:184px;margin-top:-4px"></i-con><fit-text w="44" style="margin:3px 0 0 11px">31°C</fit-text><fit-text w="123" style="margin:3px 0 0 13px">Mostly sunny</fit-text>
<i-con n="chev" w="18" h="10" style="margin-left:37px"></i-con><i-con n="cloud" w="25" h="20" style="margin-left:14px"></i-con><i-con n="batt" w="23" h="14" style="margin-left:12px"></i-con><i-con n="cam" w="18" h="22" style="margin-left:17px"></i-con><i-con n="wifi" w="19" h="18" style="margin:2px 0 0 17px"></i-con><i-con n="vol" w="21" h="18" style="margin-left:14px"></i-con>
<fit-text w="34" style="margin:0 0 0 19px;font-size:17.500px">ENG</fit-text><div style="margin:0 0 0 20px;width:83px;display:flex;flex-direction:column;align-items:center;font-size:17.500px;line-height:27px"><fit-text w="66">5:50 pm</fit-text><fit-text w="83">18/4/2023</fit-text></div><i-con n="note" w="24" style="margin-left:28px"></i-con><div style="margin-left:30px;width:1px;height:60px;background:#aab2c2"></div></div>`);

define('desk-top',`:host{width:1920px;height:1080px;display:flex;flex-direction:column;position:relative;overflow:hidden;background:#fff}`,
`<tab-strip></tab-strip><address-bar></address-bar><bookmark-bar></bookmark-bar><issue-page></issue-page><task-bar></task-bar><tutor-window></tutor-window>`);
</script>
</body>
</html>
